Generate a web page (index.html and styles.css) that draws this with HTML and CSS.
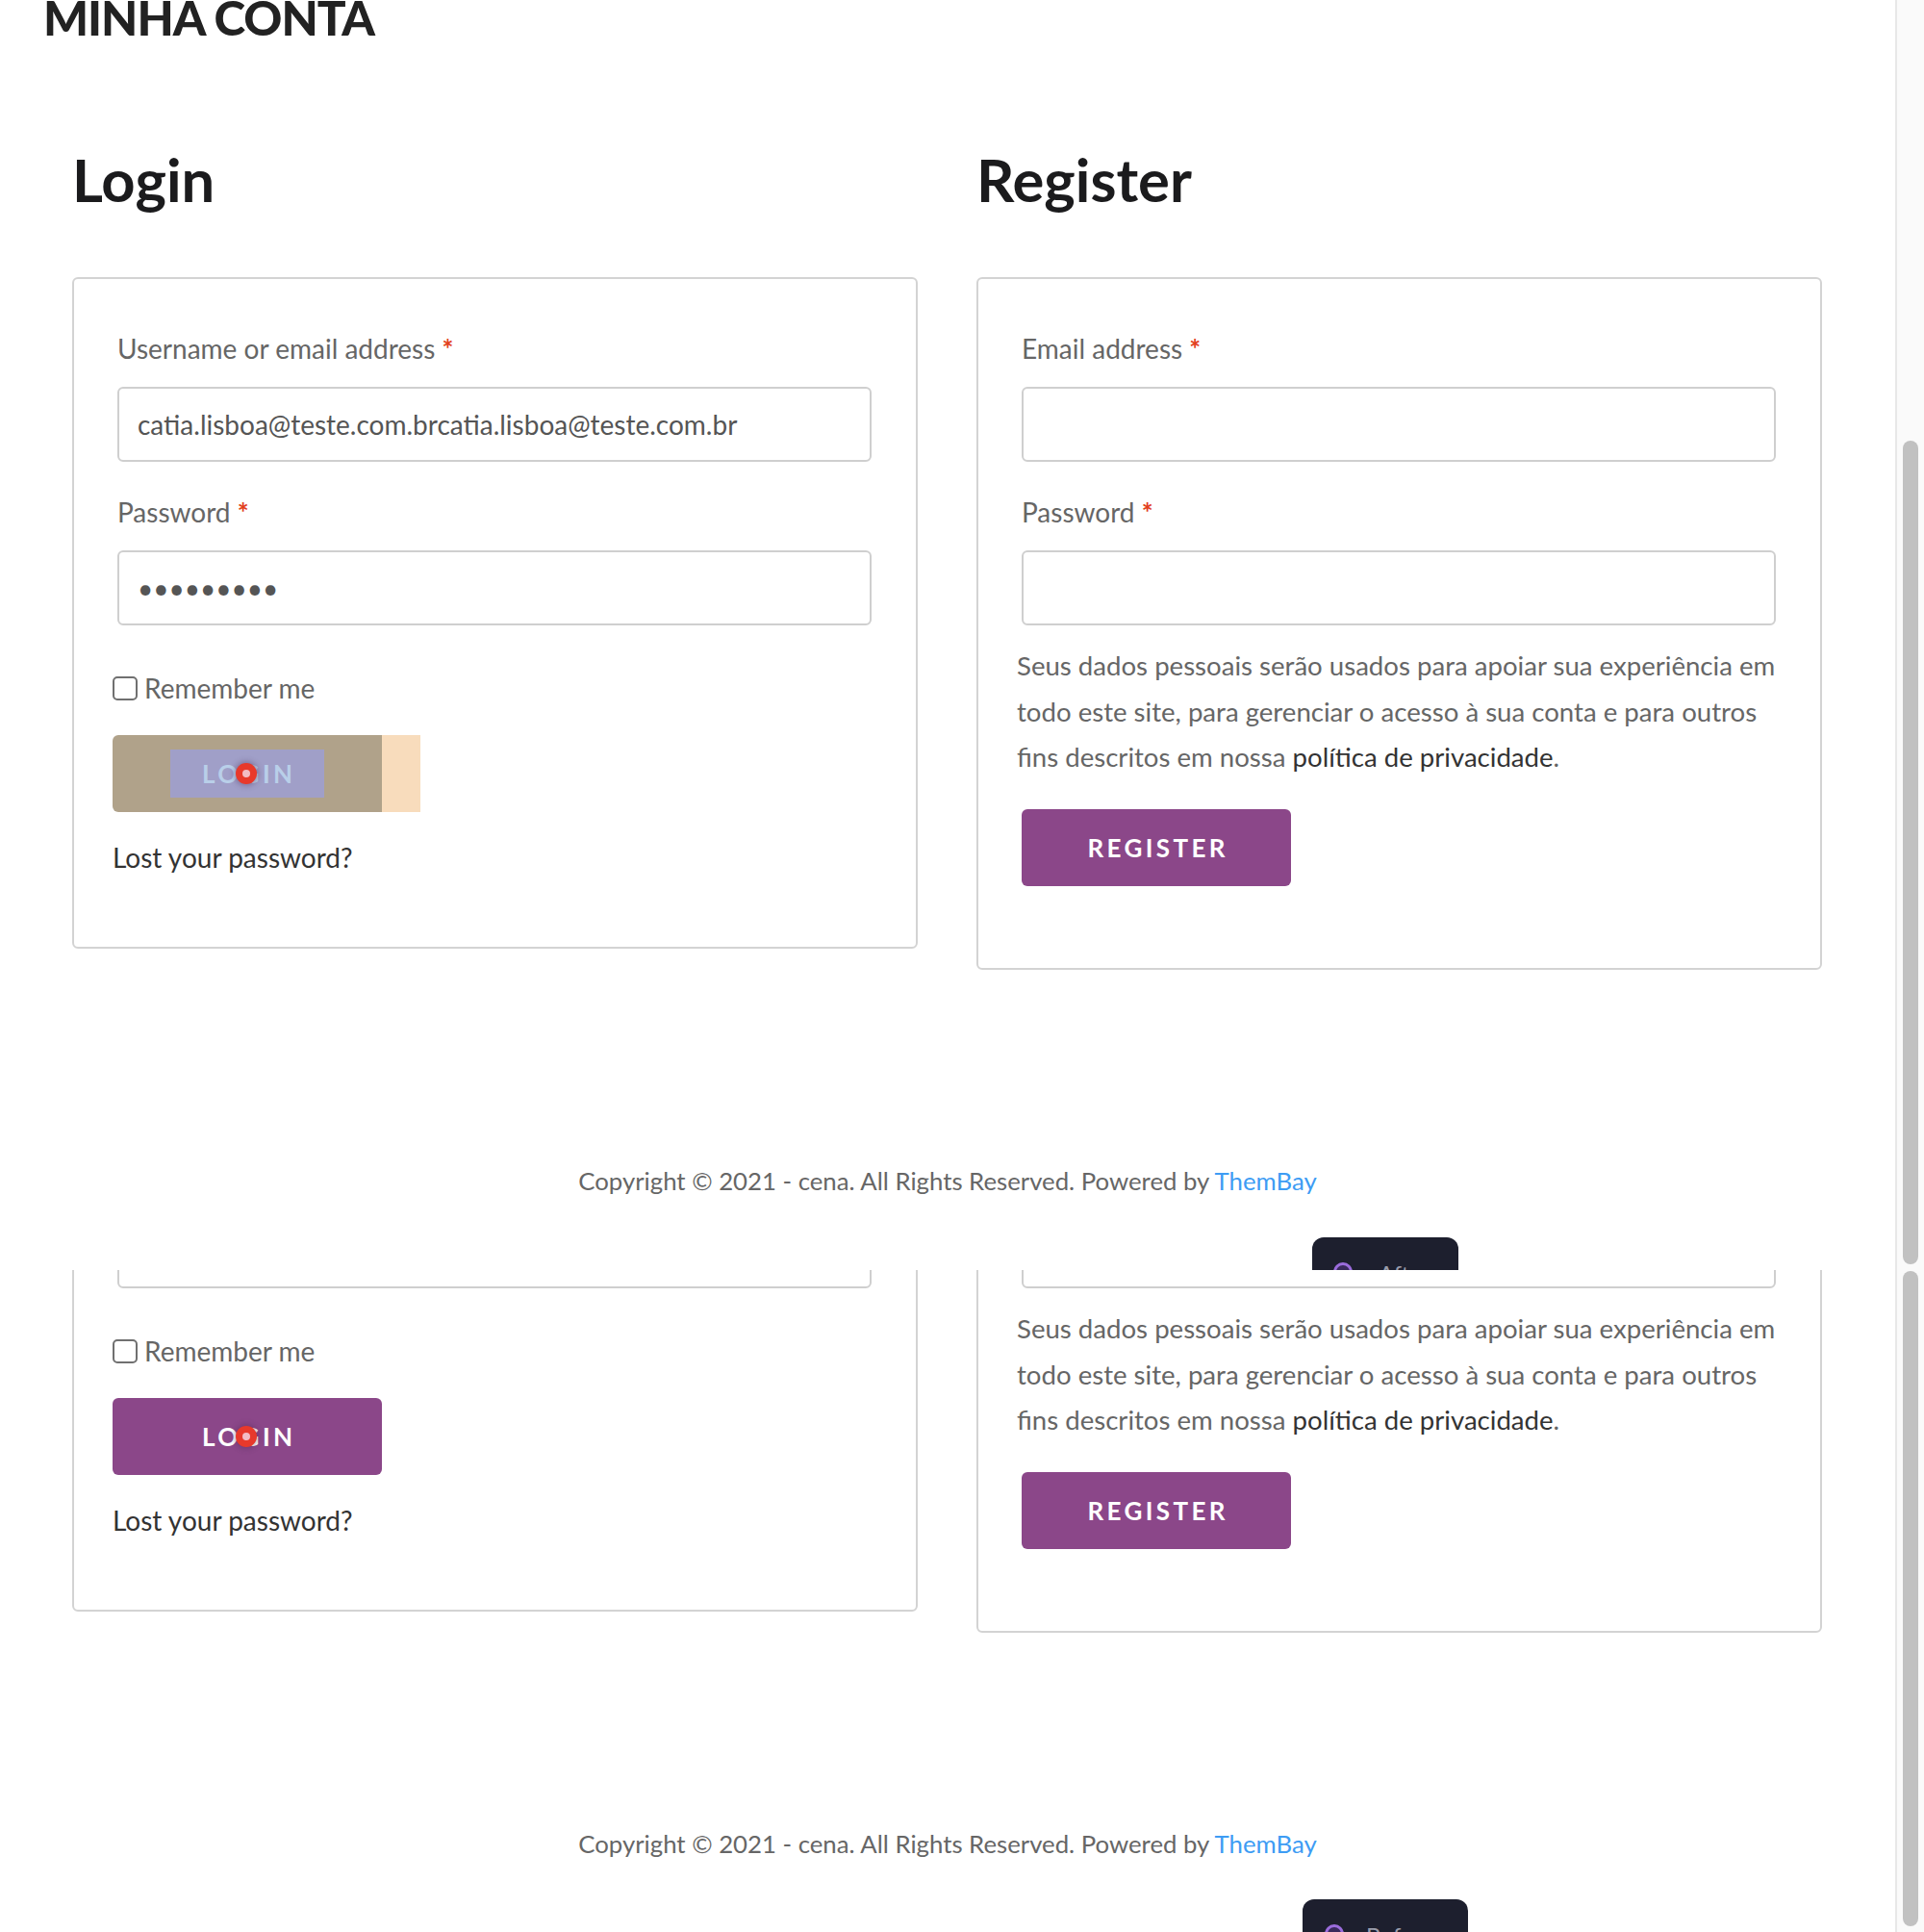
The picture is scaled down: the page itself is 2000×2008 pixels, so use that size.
FILE: index.html
```html
<!DOCTYPE html>
<html lang="pt-BR">
<head>
<meta charset="utf-8">
<title>Minha conta</title>
<link rel="stylesheet" href="styles.css">
</head>
<body>
<div class="frame frame-top">
  <div class="viewport">
    <div class="page">
      <header class="title-bar"><h1 class="page-title">MINHA CONTA</h1></header>
      <div class="columns">
        <section class="col">
          <h2 class="col-title">Login</h2>
          <form class="box box-login">
            <p class="row"><label class="lbl">Username or email address <span class="req">*</span></label><input class="field" type="text" value="catia.lisboa@teste.com.brcatia.lisboa@teste.com.br"></p>
            <p class="row row-last"><label class="lbl">Password <span class="req">*</span></label><input class="field" type="password" value="123456789"></p>
            <label class="remember"><input class="check" type="checkbox"><span>Remember me</span></label>
            <div class="actions">
              <button class="btn btn-login btn-inspected" type="button"><span class="btn-content">Login</span><span class="cursor"></span></button><span class="hl-margin"></span>
            </div>
            <p class="lost">Lost your password?</p>
          </form>
        </section>
        <section class="col">
          <h2 class="col-title">Register</h2>
          <form class="box box-register">
            <p class="row"><label class="lbl">Email address <span class="req">*</span></label><input class="field" type="email" value=""></p>
            <p class="row row-reg"><label class="lbl">Password <span class="req">*</span></label><input class="field" type="password" value=""></p>
            <p class="privacy">Seus dados pessoais serão usados para apoiar sua experiência em todo este site, para gerenciar o acesso à sua conta e para outros fins descritos em nossa <a class="privacy-link" href="#">política de privacidade</a>.</p>
            <div class="actions actions-reg">
              <button class="btn btn-register" type="button"><span class="btn-content">Register</span></button>
            </div>
          </form>
        </section>
      </div>
      <footer class="footer">Copyright © 2021 - cena. All Rights Reserved. Powered by <a href="#">ThemBay</a></footer>
      <div class="tip tip-after"><span class="tip-dot"></span><span class="tip-text">After</span></div>
    </div>
  </div>
  <div class="scrollbar"><div class="thumb"></div></div>
</div>
<div class="frame frame-bottom">
  <div class="viewport">
    <div class="page">
      <header class="title-bar"><h1 class="page-title">MINHA CONTA</h1></header>
      <div class="columns">
        <section class="col">
          <h2 class="col-title">Login</h2>
          <form class="box box-login">
            <p class="row"><label class="lbl">Username or email address <span class="req">*</span></label><input class="field" type="text" value="catia.lisboa@teste.com.brcatia.lisboa@teste.com.br"></p>
            <p class="row row-last"><label class="lbl">Password <span class="req">*</span></label><input class="field" type="password" value="123456789"></p>
            <label class="remember"><input class="check" type="checkbox"><span>Remember me</span></label>
            <div class="actions">
              <button class="btn btn-login" type="button"><span class="btn-content">Login</span><span class="cursor"></span></button>
            </div>
            <p class="lost">Lost your password?</p>
          </form>
        </section>
        <section class="col">
          <h2 class="col-title">Register</h2>
          <form class="box box-register">
            <p class="row"><label class="lbl">Email address <span class="req">*</span></label><input class="field" type="email" value=""></p>
            <p class="row row-reg"><label class="lbl">Password <span class="req">*</span></label><input class="field" type="password" value=""></p>
            <p class="privacy">Seus dados pessoais serão usados para apoiar sua experiência em todo este site, para gerenciar o acesso à sua conta e para outros fins descritos em nossa <a class="privacy-link" href="#">política de privacidade</a>.</p>
            <div class="actions actions-reg">
              <button class="btn btn-register" type="button"><span class="btn-content">Register</span></button>
            </div>
          </form>
        </section>
      </div>
      <footer class="footer">Copyright © 2021 - cena. All Rights Reserved. Powered by <a href="#">ThemBay</a></footer>
      <div class="tip tip-before"><span class="tip-dot"></span><span class="tip-text">Before</span></div>
    </div>
  </div>
  <div class="scrollbar"><div class="thumb"></div></div>
</div>
</body>
</html>
```

FILE: styles.css
```css
* { box-sizing: border-box; }
html, body { margin: 0; padding: 0; }
body {
  width: 2000px;
  height: 2008px;
  overflow: hidden;
  background: #fff;
  font-family: Lato, "Noto Sans", sans-serif;
  color: #666;
}

.frame { display: flex; overflow: hidden; }
.frame-top { height: 1320px; }
.frame-bottom { height: 688px; }
.viewport { flex: 1; overflow: hidden; background: #fff; }
.page { position: relative; width: 1970px; display: flow-root; }
.frame-bottom .page { margin-top: -631px; }

.scrollbar {
  width: 30px;
  flex: none;
  background: #fafafa;
  border-left: 2px solid #e8e8e8;
  padding-left: 6px;
}
.frame-top .scrollbar { padding-top: 458px; }
.frame-bottom .scrollbar { padding-top: 1px; }
.thumb { width: 16px; border-radius: 8px; background: #c1c1c1; }
.frame-top .thumb { height: 856px; }
.frame-bottom .thumb { height: 681px; }

.title-bar { display: flow-root; height: 44px; padding-left: 45px; }
.page-title {
  margin: -10px 0 0;
  font-size: 49.5px;
  line-height: 56px;
  font-weight: 900;
  color: #222;
  letter-spacing: -1px;
  white-space: nowrap;
}

.columns {
  display: flex;
  gap: 61px;
  padding: 0 76px 0 75px;
  margin-top: 102px;
  align-items: flex-start;
}
.col { flex: 1; min-width: 0; }
.col-title {
  margin: 0 0 62px;
  font-size: 61.5px;
  line-height: 80px;
  font-weight: 700;
  color: #1b1b1d;
}

.box {
  margin: 0;
  border: 2px solid #d3d3d3;
  border-radius: 6px;
  padding: 52px 40px 73px;
}
.box-register { padding-bottom: 85px; }

.row { margin: 0 0 32px; padding: 0 6px 0 5px; }
.row-last { margin-bottom: 45px; }
.row-reg { margin-bottom: 18px; }
.lbl {
  display: block;
  font-size: 28px;
  line-height: 40px;
  margin-bottom: 20px;
  color: #666;
}
.req { color: #e2401c; font-weight: 700; }
.field {
  display: block;
  width: 100%;
  height: 78px;
  margin: 0;
  border: 2px solid #cfcfcf;
  border-radius: 6px;
  padding: 0 19px;
  font-family: Lato, "Noto Sans", sans-serif;
  font-size: 28px;
  color: #555;
  background: #fff;
  outline: none;
}

.remember {
  display: flex;
  align-items: center;
  gap: 7px;
  font-size: 28px;
  line-height: 40px;
  color: #666;
  margin: 0 0 29px;
}
.check {
  appearance: none;
  -webkit-appearance: none;
  width: 26px;
  height: 25px;
  margin: 0;
  border: 2px solid #707070;
  border-radius: 5px;
  background: #fff;
}

.actions { display: flex; margin-bottom: 27px; }
.actions-reg { padding-left: 5px; margin-bottom: 0; }
.btn {
  position: relative;
  display: flex;
  align-items: center;
  justify-content: center;
  width: 280px;
  height: 80px;
  border: 0;
  border-radius: 6px;
  padding: 0;
  background: #8b4789;
  color: #fff;
  font-family: Lato, "Noto Sans", sans-serif;
  font-weight: 700;
  font-size: 26px;
  letter-spacing: 3.4px;
  text-transform: uppercase;
}
.btn-register { width: 280px; }
.btn-content {
  display: flex;
  align-items: center;
  justify-content: center;
  padding-left: 3.4px;
}
.btn-inspected { background: #b0a28a; color: #b9cfe9; border-radius: 6px 0 0 6px; }
.btn-inspected .btn-content { width: 160px; height: 50px; background: #a09fc8; }
.hl-margin { width: 40px; height: 80px; background: #f8dcbc; }

.cursor {
  position: absolute;
  left: 128px;
  top: 29px;
  width: 22px;
  height: 22px;
  border-radius: 50%;
  background: #e8392b;
  box-shadow: 0 0 6px 1px rgba(70, 40, 80, 0.45);
}
.cursor::after {
  content: "";
  position: absolute;
  left: 7px;
  top: 7px;
  width: 8px;
  height: 8px;
  border-radius: 50%;
  background: #f3bcc4;
}

.lost {
  margin: 0;
  font-size: 28px;
  line-height: 40px;
  color: #333;
}

.privacy {
  margin: 0 0 30px;
  font-size: 27.6px;
  line-height: 47.5px;
  color: #666;
}
.privacy-link { color: #333; text-decoration: none; }

.footer {
  margin-top: 199px;
  text-align: center;
  font-size: 25.75px;
  line-height: 40px;
  color: #666;
}
.footer a { color: #3d9cf4; text-decoration: none; }

.tip {
  position: absolute;
  top: 1286px;
  height: 90px;
  background: #1d1f2e;
  border-radius: 12px;
  display: flex;
  align-items: flex-start;
  padding-top: 26px;
}
.tip-after { left: 1364px; width: 152px; padding-left: 22px; gap: 27px; }
.tip-before { top: 1285px; left: 1354px; width: 172px; padding-left: 23px; gap: 23px; }
.tip-dot {
  width: 20px;
  height: 20px;
  flex: none;
  border-radius: 50%;
  border: 3px solid #9b6cdc;
  background: #3a2a5c;
}
.tip-text {
  font-size: 24px;
  line-height: 24px;
  margin-top: 0;
  color: #9a9cab;
}
```
